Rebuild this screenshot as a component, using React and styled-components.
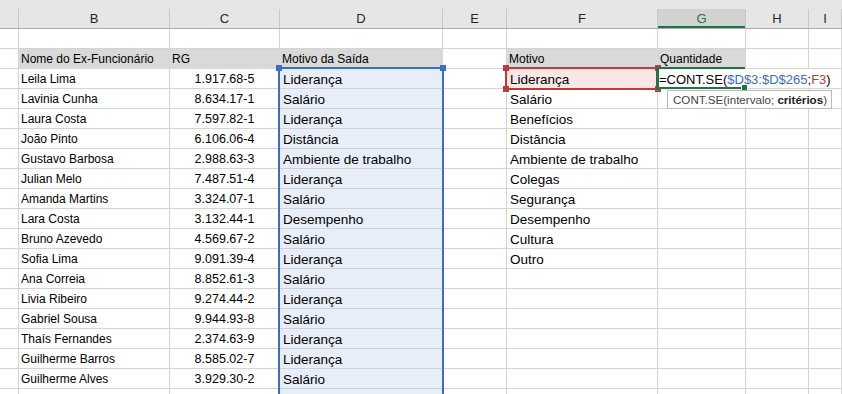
import React from 'react'
import styled, { createGlobalStyle } from 'styled-components'

const GlobalStyle = createGlobalStyle`
  html, body {
    margin: 0;
    padding: 0;
    background: #fff;
    overflow: hidden;
  }
  body {
    font-family: "Liberation Sans", Arial, sans-serif;
    color: #000;
  }
`

const COLS = '19px 151px 110px 163px 64px 151px 88px 63px 1fr'
const GRID = '#d4d4d4'
const BLUE = '#3a6ec6'
const RED = '#c0393b'
const GREEN = '#217346'

const Sheet = styled.div`
  width: 842px;
  height: 394px;
  overflow: hidden;
`

const HeaderRow = styled.div`
  display: grid;
  grid-template-columns: ${COLS};
  align-items: end;
  height: 29px;
  box-sizing: border-box;
  padding-top: 9px;
  background: #e6e6e6;
  border-bottom: 1px solid #ababab;
`

const ColHead = styled.div`
  height: 19px;
  box-sizing: border-box;
  border-right: 1px solid #c8c8c8;
  text-align: center;
  font-size: 13px;
  line-height: 20px;
  color: ${p => (p.$active ? GREEN : '#262626')};
  background: ${p => (p.$active ? '#d2d2d2' : 'transparent')};
  box-shadow: ${p => (p.$active ? `inset 0 -2px 0 ${GREEN}` : 'none')};
`

const Row = styled.div`
  display: grid;
  grid-template-columns: ${COLS};
  height: 20px;
`

const sizes = { small: '12px', num: '12.5px', big: '13.5px' }

const Cell = styled.div`
  position: relative;
  box-sizing: border-box;
  height: 20px;
  padding: 1px 2px 0 ${p => (p.$size === 'big' ? '3px' : '2px')};
  border-right: 1px solid ${p => p.$line || GRID};
  border-bottom: 1px solid ${p => p.$line || GRID};
  background: ${p => p.$fill || 'transparent'};
  font-size: ${p => sizes[p.$size || 'small']};
  line-height: 19px;
  text-align: ${p => p.$align || 'left'};
  white-space: nowrap;
`

const RefFrame = styled.div`
  position: absolute;
  left: -2px;
  top: -2px;
  right: -2px;
  height: ${p => p.$height};
  border: 2px solid ${p => p.$color};
  box-sizing: border-box;
  z-index: 2;
  pointer-events: none;
`

const Handle = styled.span`
  position: absolute;
  width: 6px;
  height: 6px;
  background: ${p => p.$color};
  ${p => (p.$bottom ? 'bottom: -4px;' : 'top: -4px;')}
  ${p => (p.$right ? 'right: -4px;' : 'left: -4px;')}
`

const EditFrame = styled.div`
  position: absolute;
  left: -2px;
  top: -2px;
  right: 0;
  bottom: -1px;
  border-top: 2px solid ${GREEN};
  border-bottom: 2px solid ${GREEN};
  border-left: 3px solid ${GREEN};
  z-index: 4;
  pointer-events: none;
`

const FillHandle = styled.span`
  position: absolute;
  right: -3px;
  bottom: -4px;
  width: 5px;
  height: 5px;
  background: ${GREEN};
  border: 1px solid #fff;
`

const Editor = styled.div`
  position: absolute;
  left: 1px;
  top: 0;
  height: 19px;
  padding: 1px 5px 0 0;
  box-sizing: border-box;
  background: #fff;
  font-size: 13px;
  line-height: 19px;
  white-space: nowrap;
  z-index: 3;
`

const Ref = styled.span`
  color: ${p => p.$color};
`

const Tip = styled.div`
  position: absolute;
  left: 9px;
  top: 21px;
  height: 17px;
  padding: 0 4px 0 5px;
  background: #fff;
  border: 1px solid #b9b9b9;
  font-size: 11.6px;
  line-height: 17px;
  color: #444;
  white-space: nowrap;
  z-index: 5;

  b {
    color: #222;
  }
`

const people = [
  ['Leila Lima', '1.917.68-5', 'Liderança'],
  ['Lavinia Cunha', '8.634.17-1', 'Salário'],
  ['Laura Costa', '7.597.82-1', 'Liderança'],
  ['João Pinto', '6.106.06-4', 'Distância'],
  ['Gustavo Barbosa', '2.988.63-3', 'Ambiente de trabalho'],
  ['Julian Melo', '7.487.51-4', 'Liderança'],
  ['Amanda Martins', '3.324.07-1', 'Salário'],
  ['Lara Costa', '3.132.44-1', 'Desempenho'],
  ['Bruno Azevedo', '4.569.67-2', 'Salário'],
  ['Sofia Lima', '9.091.39-4', 'Liderança'],
  ['Ana Correia', '8.852.61-3', 'Salário'],
  ['Livia Ribeiro', '9.274.44-2', 'Liderança'],
  ['Gabriel Sousa', '9.944.93-8', 'Salário'],
  ['Thaís Fernandes', '2.374.63-9', 'Liderança'],
  ['Guilherme Barros', '8.585.02-7', 'Liderança'],
  ['Guilherme Alves', '3.929.30-2', 'Salário'],
  ['', '', ''],
]

const motivos = [
  'Liderança', 'Salário', 'Benefícios', 'Distância', 'Ambiente de trabalho',
  'Colegas', 'Segurança', 'Desempenho', 'Cultura', 'Outro',
]

const letters = ['', 'B', 'C', 'D', 'E', 'F', 'G', 'H', 'I']
const HEAD_FILL = '#d9d9d9'
const BLUE_FILL = '#e8eef8'

const Corners = ({ color }) => (
  <>
    <Handle $color={color} />
    <Handle $color={color} $right />
    <Handle $color={color} $bottom />
    <Handle $color={color} $bottom $right />
  </>
)

const App = () => (
  <Sheet>
    <GlobalStyle />
    <HeaderRow>
      {letters.map((l, i) => (
        <ColHead key={i} $active={l === 'G'}>{l}</ColHead>
      ))}
    </HeaderRow>

    <Row>
      {letters.map((_, i) => <Cell key={i} />)}
    </Row>

    <Row>
      <Cell />
      <Cell $fill={HEAD_FILL} $line={HEAD_FILL}>Nome do Ex-Funcionário</Cell>
      <Cell $fill={HEAD_FILL} $line={HEAD_FILL}>RG</Cell>
      <Cell $fill={HEAD_FILL} $line={HEAD_FILL}>Motivo da Saída</Cell>
      <Cell />
      <Cell $fill={HEAD_FILL} $line={HEAD_FILL}>Motivo</Cell>
      <Cell $fill={HEAD_FILL} $line={HEAD_FILL}>Quantidade</Cell>
      <Cell />
      <Cell />
    </Row>

    {people.map(([name, rg, motivo], i) => (
      <Row key={i}>
        <Cell />
        <Cell>{name}</Cell>
        <Cell $size="num" $align="center">{rg}</Cell>
        <Cell $size="big" $fill={BLUE_FILL} $line="#cbd2dd">
          {i === 0 && (
            <RefFrame $color={BLUE} $height="400px">
              <Handle $color={BLUE} />
              <Handle $color={BLUE} $right />
            </RefFrame>
          )}
          {motivo}
        </Cell>
        <Cell />
        <Cell $size="big" $fill={i === 0 ? '#f9e7e7' : undefined}>
          {i === 0 && (
            <RefFrame $color={RED} $height="23px">
              <Corners color={RED} />
            </RefFrame>
          )}
          {motivos[i]}
        </Cell>
        <Cell>
          {i === 0 && (
            <>
              <EditFrame>
                <FillHandle />
              </EditFrame>
              <Editor>
                =CONT.SE(<Ref $color={BLUE}>$D$3:$D$265</Ref>;<Ref $color={RED}>F3</Ref>)
              </Editor>
              <Tip>
                CONT.SE(intervalo; <b>critérios</b>)
              </Tip>
            </>
          )}
        </Cell>
        <Cell />
        <Cell />
      </Row>
    ))}
  </Sheet>
)

export default App
